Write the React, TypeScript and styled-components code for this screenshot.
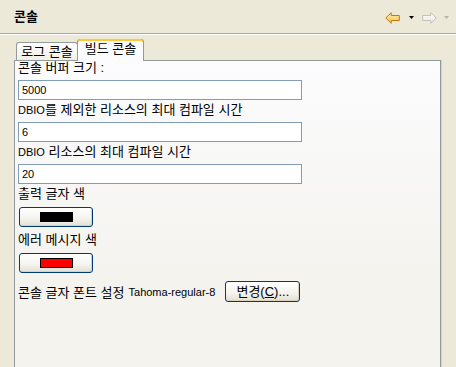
import React from 'react';
import styled, { createGlobalStyle } from 'styled-components';

const GlobalStyle = createGlobalStyle`
  html, body {
    margin: 0;
    padding: 0;
    background: #ece9d8;
  }
  body {
    font-family: "Liberation Sans", "Noto Sans CJK KR", sans-serif;
    font-size: 13px;
    color: #000;
  }
`;

const Page = styled.div`
  height: 100vh;
  display: flex;
  flex-direction: column;
  overflow: hidden;
`;

const Header = styled.div`
  height: 33px;
  flex-shrink: 0;
  display: flex;
  align-items: center;
  justify-content: space-between;
  padding: 0 7px 0 14px;
  border-bottom: 1px solid #aca899;
  box-shadow: 0 1px 0 #fff;
`;

const Title = styled.div`
  font-weight: bold;
  font-size: 13px;
  line-height: 16px;
  padding-top: 1px;
`;

const Nav = styled.div`
  display: flex;
  align-items: center;
  padding-top: 2px;
`;

const NavGap = styled.span<{ w: number }>`
  display: inline-block;
  width: ${(p) => p.w}px;
`;

const Body = styled.div`
  flex: 1;
  display: flex;
  flex-direction: column;
  padding: 5px 15px 0 14px;
`;

const TabStrip = styled.div`
  display: flex;
  align-items: flex-end;
  height: 21px;
  padding-left: 2px;
`;

const Tab = styled.div<{ active?: boolean }>`
  position: relative;
  box-sizing: border-box;
  font-size: 13px;
  line-height: 16px;
  text-align: center;
  white-space: nowrap;
  border: 1px solid #919b9c;
  border-bottom: none;
  border-radius: 3px 3px 0 0;
  ${(p) =>
    p.active
      ? `
    z-index: 2;
    width: 67px;
    height: 22px;
    margin-bottom: -1px;
    margin-left: -1px;
    padding-top: 2px;
    border-top: none;
    background: #fcfcfe;
    box-shadow: inset 0 2px 0 #ffc83c, inset 0 1px 0 #e68b2c;
  `
      : `
    width: 62px;
    height: 18px;
    padding-top: 1px;
    background: linear-gradient(to bottom, #ffffff, #f1efe6);
  `}
`;

const Panel = styled.div`
  flex: 1;
  display: flex;
  flex-direction: column;
  align-items: flex-start;
  padding: 0 3px;
  border: 1px solid #919b9c;
  border-bottom: none;
  background: linear-gradient(to bottom, #fcfcfe, #f4f3ee 70%);
  box-shadow: 1px 0 0 #d5d2c2;
`;

const Label = styled.div<{ first?: boolean }>`
  font-size: 13px;
  line-height: 16px;
  white-space: nowrap;
  margin: ${(p) => (p.first ? '-1px 0 4px' : '2px 0 4px')};
`;

const Latin = styled.span`
  font-family: "Liberation Sans", sans-serif;
  font-size: 11px;
`;

const TextField = styled.input`
  box-sizing: border-box;
  width: 284px;
  height: 20px;
  margin: 0;
  padding: 0 3px;
  border: 1px solid #7f9db9;
  background: #fff;
  font-family: "Liberation Sans", sans-serif;
  font-size: 11px;
  color: #000;
  outline: none;
`;

const XpButton = styled.button`
  box-sizing: border-box;
  display: flex;
  align-items: center;
  justify-content: center;
  padding: 0;
  border: 1px solid #003c74;
  border-radius: 3px;
  background: linear-gradient(to bottom, #ffffff 0%, #f5f4ef 55%, #e3e0d4 100%);
  box-shadow: inset -1px -1px 0 #d8d2bd;
  font-family: "Liberation Sans", "Noto Sans CJK KR", sans-serif;
  font-size: 13px;
  color: #000;
  cursor: pointer;
`;

const ColorButton = styled(XpButton)`
  width: 74px;
  height: 20px;
  margin: 1px 0 3px 1px;
`;

const Swatch = styled.span<{ color: string }>`
  display: block;
  box-sizing: border-box;
  width: 33px;
  height: 10px;
  border: 1px solid #000;
  background: ${(p) => p.color};
`;

const FontRow = styled.div`
  display: flex;
  align-items: center;
  margin-top: 5px;
  white-space: nowrap;
`;

const FontName = styled.span`
  font-family: "Liberation Sans", sans-serif;
  font-size: 11px;
  margin: 0 10px 0 4px;
`;

const ChangeButton = styled(XpButton)`
  width: 75px;
  height: 21px;
  line-height: 16px;
`;

const Mnemonic = styled.span`
  text-decoration: underline;
`;

const Arrow: React.FC<{ dir: 'back' | 'fwd'; enabled: boolean }> = ({ dir, enabled }) => (
  <svg width="15" height="12" viewBox="0 0 15 12" style={{ transform: dir === 'fwd' ? 'scaleX(-1)' : undefined }}>
    <defs>
      <linearGradient id={`g-${dir}`} x1="0" y1="0" x2="0" y2="1">
        <stop offset="0" stopColor={enabled ? '#fff2b8' : '#ffffff'} />
        <stop offset="1" stopColor={enabled ? '#f6c23e' : '#e8e6de'} />
      </linearGradient>
    </defs>
    <path
      d="M0.8 6 L6.2 0.7 V3.5 H14.3 V8.5 H6.2 V11.3 Z"
      fill={`url(#g-${dir})`}
      stroke={enabled ? '#c07a12' : '#c3c1b8'}
      strokeWidth="1"
      strokeLinejoin="round"
    />
  </svg>
);

const Drop: React.FC<{ enabled: boolean }> = ({ enabled }) => (
  <svg width="5" height="3" viewBox="0 0 5 3">
    <path d="M0 0 H5 L2.5 3 Z" fill={enabled ? '#000' : '#b5b3aa'} />
  </svg>
);

const App: React.FC = () => {
  return (
    <Page>
      <GlobalStyle />
      <Header>
        <Title>콘솔</Title>
        <Nav>
          <Arrow dir="back" enabled />
          <NavGap w={9} />
          <Drop enabled />
          <NavGap w={8} />
          <Arrow dir="fwd" enabled={false} />
          <NavGap w={7} />
          <Drop enabled={false} />
        </Nav>
      </Header>
      <Body>
        <TabStrip>
          <Tab>로그 콘솔</Tab>
          <Tab active>빌드 콘솔</Tab>
        </TabStrip>
        <Panel>
          <Label first>콘솔 버퍼 크기 :</Label>
          <TextField defaultValue="5000" />
          <Label>
            <Latin>DBIO</Latin>를 제외한 리소스의 최대 컴파일 시간
          </Label>
          <TextField defaultValue="6" />
          <Label>
            <Latin>DBIO</Latin> 리소스의 최대 컴파일 시간
          </Label>
          <TextField defaultValue="20" />
          <Label>출력 글자 색</Label>
          <ColorButton>
            <Swatch color="#000000" />
          </ColorButton>
          <Label>에러 메시지 색</Label>
          <ColorButton>
            <Swatch color="#ff0000" />
          </ColorButton>
          <FontRow>
            <span>콘솔 글자 폰트 설정</span>
            <FontName>Tahoma-regular-8</FontName>
            <ChangeButton>
              변경(<Mnemonic>C</Mnemonic>)...
            </ChangeButton>
          </FontRow>
        </Panel>
      </Body>
    </Page>
  );
};

export default App;
